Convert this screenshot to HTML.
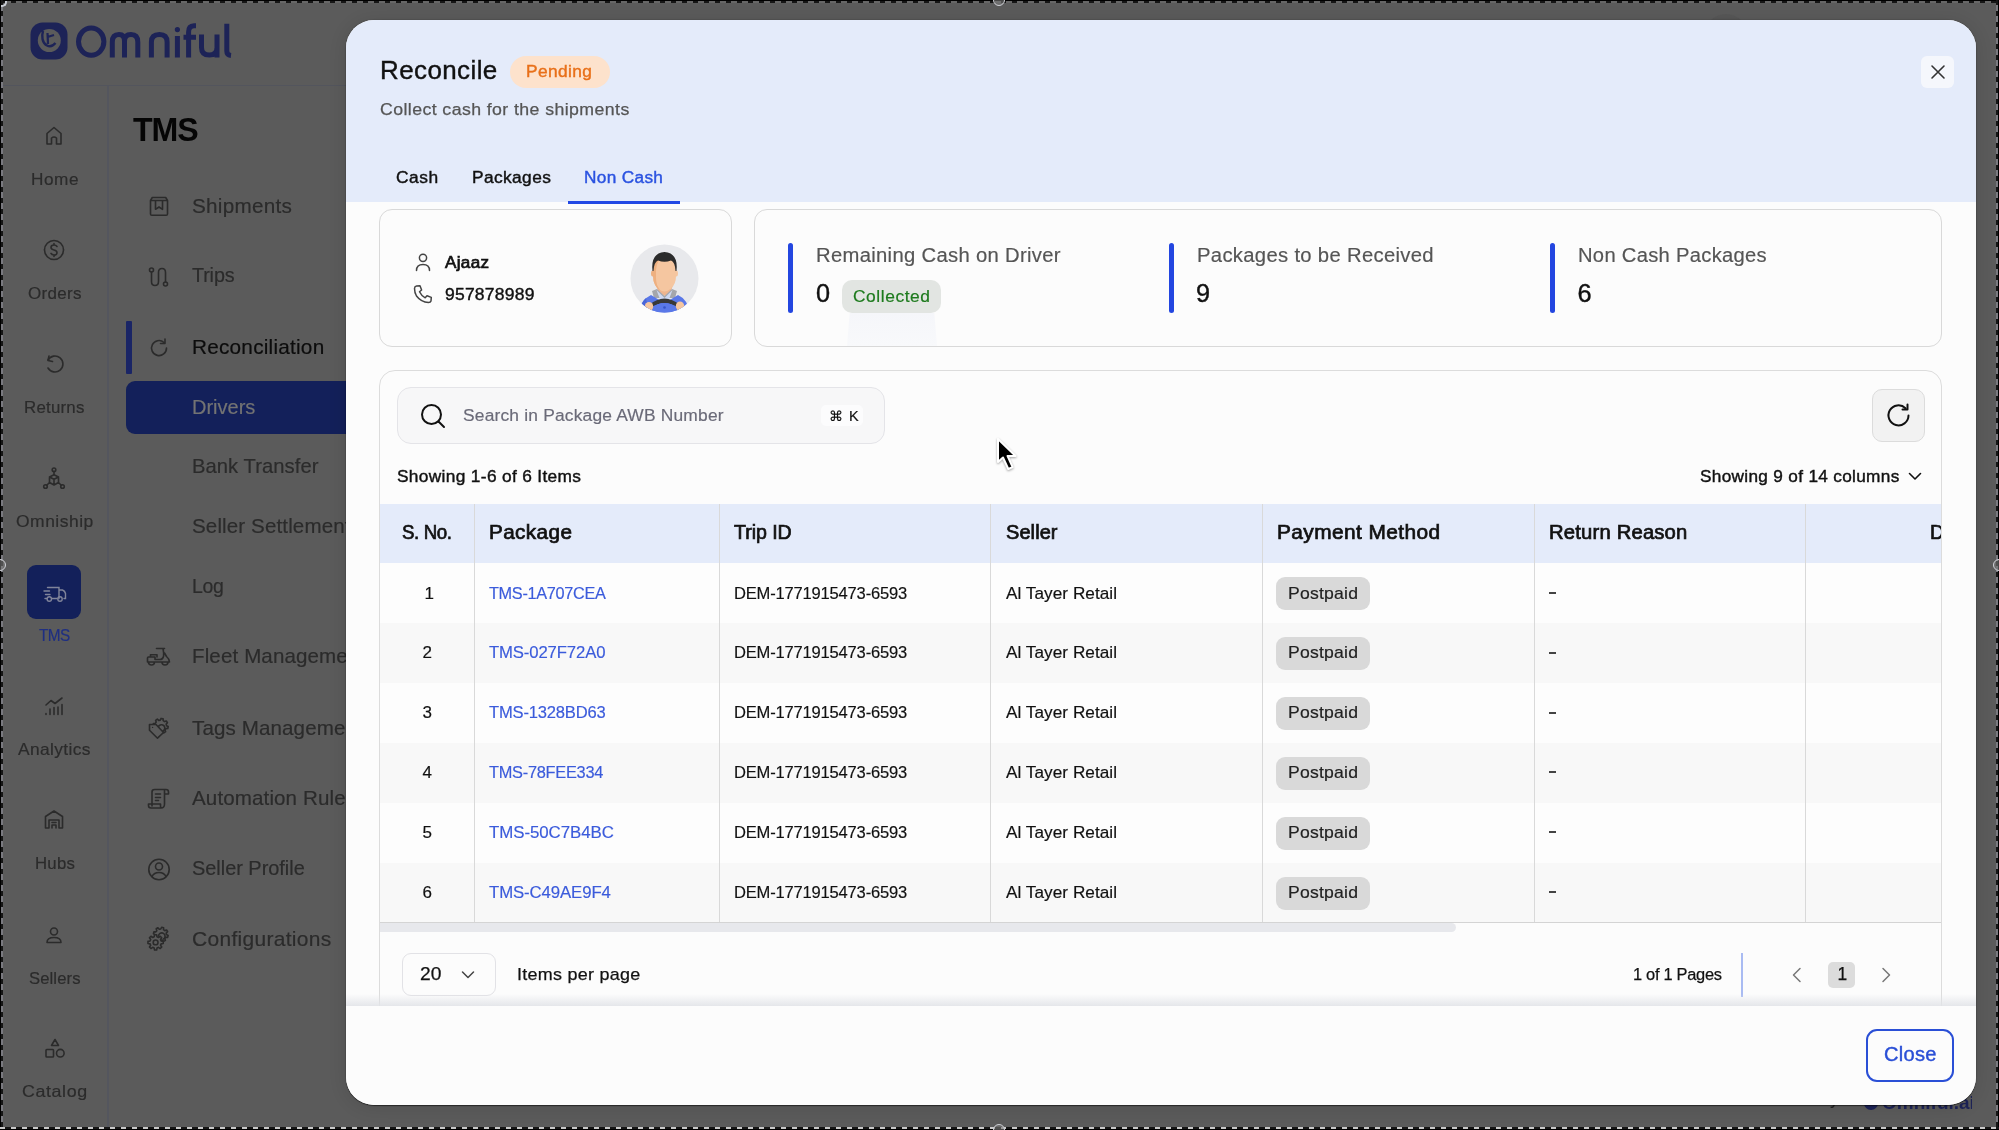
<!DOCTYPE html><html><head><meta charset="utf-8"><style>
html,body{margin:0;padding:0;}
body{width:1999px;height:1130px;position:relative;overflow:hidden;background:#5b5b5b;font-family:"Liberation Sans",sans-serif;}
.t{position:absolute;white-space:nowrap;}
.r{position:absolute;box-sizing:border-box;}
#wrap{position:absolute;left:0;top:0;width:1999px;height:1130px;will-change:transform;}
</style></head><body><div id="wrap">
<div class="r" style="left:0px;top:85px;width:346px;height:1px;background:#53555d"></div>
<div class="r" style="left:107px;top:86px;width:2px;height:1044px;background:#54565e"></div>
<svg class="r" style="left:28px;top:20px;" width="210" height="44" viewBox="0 0 210 44" fill="none">
<rect x="2.5" y="2.5" width="37" height="37" rx="12" fill="#1d2357"/>
<circle cx="21.3" cy="20.5" r="11.5" fill="#5b5b5b"/>
<path d="M15 11 C13.5 16 14 23 19 25.5 C22 27 25 26 27.5 23" stroke="#1d2357" stroke-width="2.4" fill="none"/>
<path d="M19.5 13 L20 24 M19.5 17 L26 15" stroke="#1d2357" stroke-width="2.2" fill="none"/>
<ellipse cx="63.2" cy="21.6" rx="12.7" ry="13.6" stroke="#1d2357" stroke-width="5"/>
<path d="M84.3 37.5 V22 Q84.3 14.5 91 14.5 Q96.5 14.5 96.5 21 V37.5 M96.5 21 Q96.5 14.5 103 14.5 Q109.8 14.5 109.8 22 V37.5" stroke="#1d2357" stroke-width="5"/>
<path d="M123.4 37.5 V22 Q123.4 14.5 131.5 14.5 Q139.1 14.5 139.1 22 V37.5" stroke="#1d2357" stroke-width="5"/>
<path d="M149.4 37.5 V16" stroke="#1d2357" stroke-width="5"/>
<circle cx="149.4" cy="9.6" r="2.6" fill="#1d2357"/>
<path d="M160.6 37.5 V12 Q160.6 6 166 5.8 H168 M155.5 17.2 H168" stroke="#1d2357" stroke-width="5"/>
<path d="M173.5 14.5 V27.5 Q173.5 35 181.3 35 Q189 35 189 27.5 V14.5 M189 25 V37.5" stroke="#1d2357" stroke-width="5"/>
<path d="M198.8 3.8 V31 Q198.8 35 203 35.5" stroke="#1d2357" stroke-width="5"/>
</svg>
<svg class="r" style="left:44px;top:125px;" width="20" height="21" viewBox="0 0 20 21" fill="none"><path d="M3 19 V8.5 L10 2.5 L17 8.5 V19 H12.5 V13 Q10 11 7.5 13 V19 Z" stroke="#2b2b2b" stroke-width="1.6" stroke-linecap="round" stroke-linejoin="round" fill="none"/></svg>
<svg class="r" style="left:42px;top:238px;" width="24" height="24" viewBox="0 0 24 24" fill="none"><circle cx="12" cy="12" r="9.5" stroke="#2b2b2b" stroke-width="1.6" stroke-linecap="round" stroke-linejoin="round" fill="none"/><path d="M15 8.5 Q14 7 12 7 Q9 7 9 9.4 Q9 11.3 12 12 Q15 12.7 15 14.7 Q15 17 12 17 Q9.8 17 9 15.4 M12 5.5 V7 M12 17 V18.5" stroke="#2b2b2b" stroke-width="1.6" stroke-linecap="round" stroke-linejoin="round" fill="none"/></svg>
<svg class="r" style="left:43px;top:352px;" width="22" height="24" viewBox="0 0 22 24" fill="none"><path d="M5 8 A8 8 0 1 1 5 16" stroke="#2b2b2b" stroke-width="1.6" stroke-linecap="round" stroke-linejoin="round" fill="none" transform="translate(0,0)"/><path d="M6 4 L5 8.5 L9.5 9.5" stroke="#2b2b2b" stroke-width="1.6" stroke-linecap="round" stroke-linejoin="round" fill="none"/></svg>
<svg class="r" style="left:42px;top:466px;" width="24" height="24" viewBox="0 0 24 24" fill="none"><circle cx="12" cy="3.8" r="1.8" stroke="#2b2b2b" stroke-width="1.6" stroke-linecap="round" stroke-linejoin="round" fill="none"/><path d="M12 5.6 V9 M7.5 11 L12 8.8 L16.5 11 V16.5 L12 19 L7.5 16.5 Z M7.5 11 L12 13.3 L16.5 11 M12 13.3 V19 M7.5 16.5 L4.5 19.5 M16.5 16.5 L19.5 19.5" stroke="#2b2b2b" stroke-width="1.6" stroke-linecap="round" stroke-linejoin="round" fill="none"/><circle cx="3.5" cy="20.5" r="1.8" stroke="#2b2b2b" stroke-width="1.6" stroke-linecap="round" stroke-linejoin="round" fill="none"/><circle cx="20.5" cy="20.5" r="1.8" stroke="#2b2b2b" stroke-width="1.6" stroke-linecap="round" stroke-linejoin="round" fill="none"/></svg>
<div class="r" style="left:27px;top:565px;width:54px;height:54px;background:#13205a;border-radius:9px"></div>
<svg class="r" style="left:41px;top:584px;" width="27" height="19" viewBox="0 0 27 19" fill="none"><path d="M6.5 3.5 H18 V14.5 M18 6 H21.5 Q24 7 24.5 9.5 V14.5 H23 M11 14.5 H16 M4 14.5 H5.5 M3 7 H8.5 M4.5 10.5 H9" stroke="#80849a" stroke-width="1.4" fill="none" stroke-linecap="round"/><circle cx="8.3" cy="15" r="2.2" stroke="#80849a" stroke-width="1.4"/><circle cx="19" cy="15" r="2.2" stroke="#80849a" stroke-width="1.4"/></svg>
<svg class="r" style="left:43px;top:696px;" width="22" height="21" viewBox="0 0 22 21" fill="none"><path d="M3 9 L8 4.5 L12 7.5 L19 2 M3 18.5 V17.5 M7 18.5 V13 M11 18.5 V11.5 M15 18.5 V11 M19 18.5 V8.5" stroke="#2b2b2b" stroke-width="1.6" stroke-linecap="round" stroke-linejoin="round" fill="none"/></svg>
<svg class="r" style="left:42px;top:808px;" width="24" height="23" viewBox="0 0 24 23" fill="none"><path d="M3.5 20 V8.5 L12 3 L20.5 8.5 V20 H17 V12 H7 V20 Z M10 20 V17 H14 V20 M10 14.5 H14" stroke="#2b2b2b" stroke-width="1.6" stroke-linecap="round" stroke-linejoin="round" fill="none"/></svg>
<svg class="r" style="left:44px;top:925px;" width="20" height="20" viewBox="0 0 20 20" fill="none"><circle cx="10" cy="6.5" r="3.5" stroke="#2b2b2b" stroke-width="1.6" stroke-linecap="round" stroke-linejoin="round" fill="none"/><path d="M3 17.5 Q3 12.5 10 12.5 Q17 12.5 17 17.5 Z" stroke="#2b2b2b" stroke-width="1.6" stroke-linecap="round" stroke-linejoin="round" fill="none"/></svg>
<svg class="r" style="left:43px;top:1037px;" width="24" height="24" viewBox="0 0 24 24" fill="none"><path d="M12 2.5 L15.5 8.5 H8.5 Z" stroke="#2b2b2b" stroke-width="1.6" stroke-linecap="round" stroke-linejoin="round" fill="none"/><rect x="3" y="12.5" width="7.5" height="7.5" rx="0.8" stroke="#2b2b2b" stroke-width="1.6" stroke-linecap="round" stroke-linejoin="round" fill="none"/><circle cx="17.3" cy="16.2" r="3.8" stroke="#2b2b2b" stroke-width="1.6" stroke-linecap="round" stroke-linejoin="round" fill="none"/></svg>
<div class="t" style="left:30.50px;top:170.91px;font-size:16.28px;line-height:16.28px;letter-spacing:0.515px;color:#2b2b2b;font-weight:normal;-webkit-text-stroke:0.18px #2b2b2b;transform:scaleX(1.0564);transform-origin:0.00px 0;">Home</div>
<div class="t" style="left:27.50px;top:285.01px;font-size:16.28px;line-height:16.28px;letter-spacing:0.287px;color:#2b2b2b;font-weight:normal;-webkit-text-stroke:0.18px #2b2b2b;transform:scaleX(1.0452);transform-origin:0.00px 0;">Orders</div>
<div class="t" style="left:24.20px;top:399.41px;font-size:16.28px;line-height:16.28px;letter-spacing:0.219px;color:#2b2b2b;font-weight:normal;-webkit-text-stroke:0.18px #2b2b2b;transform:scaleX(1.0359);transform-origin:0.00px 0;">Returns</div>
<div class="t" style="left:15.50px;top:513.21px;font-size:16.28px;line-height:16.28px;letter-spacing:0.455px;color:#2b2b2b;font-weight:normal;-webkit-text-stroke:0.18px #2b2b2b;transform:scaleX(1.0747);transform-origin:0.00px 0;">Omniship</div>
<div class="t" style="left:38.80px;top:627.01px;font-size:16.28px;line-height:16.28px;letter-spacing:-0.670px;color:#1f2f82;font-weight:normal;-webkit-text-stroke:0.18px #1f2f82;transform:scaleX(0.9447);transform-origin:0.00px 0;">TMS</div>
<div class="t" style="left:17.90px;top:741.21px;font-size:16.28px;line-height:16.28px;letter-spacing:0.349px;color:#2b2b2b;font-weight:normal;-webkit-text-stroke:0.18px #2b2b2b;transform:scaleX(1.0688);transform-origin:0.00px 0;">Analytics</div>
<div class="t" style="left:34.50px;top:855.11px;font-size:16.28px;line-height:16.28px;letter-spacing:0.247px;color:#2b2b2b;font-weight:normal;-webkit-text-stroke:0.18px #2b2b2b;transform:scaleX(1.0301);transform-origin:0.00px 0;">Hubs</div>
<div class="t" style="left:28.50px;top:969.71px;font-size:16.28px;line-height:16.28px;letter-spacing:0.114px;color:#2b2b2b;font-weight:normal;-webkit-text-stroke:0.18px #2b2b2b;transform:scaleX(1.0211);transform-origin:0.00px 0;">Sellers</div>
<div class="t" style="left:21.70px;top:1083.21px;font-size:16.28px;line-height:16.28px;letter-spacing:0.547px;color:#2b2b2b;font-weight:normal;-webkit-text-stroke:0.18px #2b2b2b;transform:scaleX(1.0963);transform-origin:0.00px 0;">Catalog</div>
<div class="t" style="left:132.70px;top:112.54px;font-size:33.72px;line-height:33.72px;letter-spacing:-1.172px;color:#050505;font-weight:bold;transform:scaleX(0.9529);transform-origin:0.00px 0;">TMS</div>
<div class="r" style="left:126px;top:321px;width:6px;height:53px;background:#1a2566;border-radius:1px"></div>
<div class="r" style="left:126px;top:381px;width:274px;height:53px;background:#13205a;border-radius:9px"></div>
<div class="t" style="left:192.20px;top:195.71px;font-size:20.06px;line-height:20.06px;letter-spacing:0.244px;color:#2b2b2b;font-weight:normal;-webkit-text-stroke:0.18px #2b2b2b;transform:scaleX(1.0319);transform-origin:0.00px 0;">Shipments</div>
<div class="t" style="left:192.20px;top:265.41px;font-size:20.06px;line-height:20.06px;letter-spacing:-0.127px;color:#2b2b2b;font-weight:normal;-webkit-text-stroke:0.18px #2b2b2b;transform:scaleX(0.9832);transform-origin:0.00px 0;">Trips</div>
<div class="t" style="left:192.20px;top:336.61px;font-size:20.06px;line-height:20.06px;letter-spacing:0.219px;color:#0c0c0c;font-weight:normal;-webkit-text-stroke:0.18px #0c0c0c;transform:scaleX(1.0354);transform-origin:0.00px 0;">Reconciliation</div>
<div class="t" style="left:192.20px;top:396.51px;font-size:20.06px;line-height:20.06px;letter-spacing:-0.007px;color:#737373;font-weight:normal;-webkit-text-stroke:0.18px #737373;transform:scaleX(0.9990);transform-origin:0.00px 0;">Drivers</div>
<div class="t" style="left:192.20px;top:456.41px;font-size:20.06px;line-height:20.06px;letter-spacing:0.055px;color:#2b2b2b;font-weight:normal;-webkit-text-stroke:0.18px #2b2b2b;transform:scaleX(1.0079);transform-origin:0.00px 0;">Bank Transfer</div>
<div class="t" style="left:192.20px;top:516.01px;font-size:20.06px;line-height:20.06px;letter-spacing:0.120px;color:#2b2b2b;font-weight:normal;-webkit-text-stroke:0.18px #2b2b2b;transform:scaleX(1.0250);transform-origin:0.00px 0;">Seller Settlement</div>
<div class="t" style="left:192.20px;top:575.61px;font-size:20.06px;line-height:20.06px;letter-spacing:-0.342px;color:#2b2b2b;font-weight:normal;-webkit-text-stroke:0.18px #2b2b2b;transform:scaleX(0.9703);transform-origin:0.00px 0;">Log</div>
<div class="t" style="left:192.20px;top:646.21px;font-size:20.06px;line-height:20.06px;letter-spacing:0.120px;color:#2b2b2b;font-weight:normal;-webkit-text-stroke:0.18px #2b2b2b;transform:scaleX(1.0250);transform-origin:0.00px 0;">Fleet Management</div>
<div class="t" style="left:192.20px;top:717.51px;font-size:20.06px;line-height:20.06px;letter-spacing:0.120px;color:#2b2b2b;font-weight:normal;-webkit-text-stroke:0.18px #2b2b2b;transform:scaleX(1.0250);transform-origin:0.00px 0;">Tags Management</div>
<div class="t" style="left:192.20px;top:788.21px;font-size:20.06px;line-height:20.06px;letter-spacing:0.120px;color:#2b2b2b;font-weight:normal;-webkit-text-stroke:0.18px #2b2b2b;transform:scaleX(1.0250);transform-origin:0.00px 0;">Automation Rules</div>
<div class="t" style="left:192.20px;top:858.41px;font-size:20.06px;line-height:20.06px;letter-spacing:-0.027px;color:#2b2b2b;font-weight:normal;-webkit-text-stroke:0.18px #2b2b2b;transform:scaleX(0.9953);transform-origin:0.00px 0;">Seller Profile</div>
<div class="t" style="left:192.20px;top:929.01px;font-size:20.06px;line-height:20.06px;letter-spacing:0.291px;color:#2b2b2b;font-weight:normal;-webkit-text-stroke:0.18px #2b2b2b;transform:scaleX(1.0459);transform-origin:0.00px 0;">Configurations</div>
<svg class="r" style="left:147px;top:195px;" width="23" height="23" viewBox="0 0 23 23" fill="none"><path d="M3.5 5.5 L5.3 2.5 H18.7 L20.5 5.5 V19 Q20.5 20.3 19.2 20.3 H4.8 Q3.5 20.3 3.5 19 Z M3.5 5.5 H20.5 M8.5 5.5 V14.3 L12 12 L15.5 14.3 V5.5" stroke="#2b2b2b" stroke-width="1.6" stroke-linecap="round" stroke-linejoin="round" fill="none"/></svg>
<svg class="r" style="left:147px;top:266px;" width="23" height="22" viewBox="0 0 23 22" fill="none"><circle cx="4.5" cy="4" r="2" stroke="#2b2b2b" stroke-width="1.6" stroke-linecap="round" stroke-linejoin="round" fill="none"/><circle cx="18.5" cy="18" r="2" stroke="#2b2b2b" stroke-width="1.6" stroke-linecap="round" stroke-linejoin="round" fill="none"/><path d="M4.5 6 V15.5 Q4.5 19.5 8 19.5 Q11.5 19.5 11.5 15.5 V6.5 Q11.5 2.5 15 2.5 Q18.5 2.5 18.5 6.5 V16" stroke="#2b2b2b" stroke-width="1.6" stroke-linecap="round" stroke-linejoin="round" fill="none"/></svg>
<svg class="r" style="left:148px;top:337px;" width="22" height="22" viewBox="0 0 22 22" fill="none"><path d="M18.5 11 A7.5 7.5 0 1 1 16 5.5" stroke="#2b2b2b" stroke-width="1.6" stroke-linecap="round" stroke-linejoin="round" fill="none"/><path d="M17 2 V6.5 H12.5" stroke="#2b2b2b" stroke-width="1.6" stroke-linecap="round" stroke-linejoin="round" fill="none"/></svg>
<svg class="r" style="left:145px;top:645px;" width="27" height="24" viewBox="0 0 27 24" fill="none"><path d="M11.5 3.5 H19.5 M18 3.5 Q19 8.5 18.6 11 Q18 14.5 14.5 14.5 H10 V12 H3.5 Q2.5 12 2.5 13 V17 H24.5 Q24.5 14 21.5 11.5 L19.5 8 M5.5 12 V9.8 H12 V12 M3.5 17 A3 3 0 0 0 9.5 17 M17 17 A3 3 0 0 0 23 17" stroke="#2b2b2b" stroke-width="1.6" stroke-linecap="round" stroke-linejoin="round" fill="none"/></svg>
<svg class="r" style="left:144px;top:712px;" width="32" height="32" viewBox="0 0 32 32" fill="none"><path d="M24.19 14.48 L23.77 16.52 L21.90 16.59 L21.00 17.94 L21.63 19.70 L19.89 20.85 L18.51 19.58 L16.93 19.89 L16.12 21.59 L14.08 21.17 L14.01 19.30 L12.66 18.40 L10.90 19.03 L9.75 17.29 L11.02 15.91 L10.71 14.33 L9.01 13.52 L9.43 11.48 L11.30 11.41 L12.20 10.06 L11.57 8.30 L13.31 7.15 L14.69 8.42 L16.27 8.11 L17.08 6.41 L19.12 6.83 L19.19 8.70 L20.54 9.60 L22.30 8.97 L23.45 10.71 L22.18 12.09 L22.49 13.67 Z" stroke="#2b2b2b" stroke-width="1.6" stroke-linecap="round" stroke-linejoin="round" fill="none"/><path d="M14.2 16 A3.3 3.3 0 1 1 19 19" stroke="#2b2b2b" stroke-width="1.6" stroke-linecap="round" stroke-linejoin="round" fill="none"/><path d="M5.5 12.5 H12 L19.5 20.5 L13.5 26.2 L5.5 18.2 Z" fill="#5b5b5b" stroke="#2b2b2b" stroke-width="1.6" stroke-linecap="round" stroke-linejoin="round" /><circle cx="8.6" cy="15.4" r="0.7" fill="#2b2b2b"/></svg>
<svg class="r" style="left:146px;top:787px;" width="26" height="24" viewBox="0 0 26 24" fill="none"><path d="M6 19 V5 Q6 2.5 8.5 2.5 H20 Q22.5 2.5 22.5 5 V7 H18.5 M18.5 3 V17 Q18.5 21 15 21 H5 Q2.5 21 2.5 18.5 V17 H14.5 V19 Q14.5 21 16 21 M9.5 7 H14.5 M9.5 10.5 H14.5 M9.5 13.5 H12.5" stroke="#2b2b2b" stroke-width="1.6" stroke-linecap="round" stroke-linejoin="round" fill="none"/></svg>
<svg class="r" style="left:146px;top:857px;" width="26" height="25" viewBox="0 0 26 25" fill="none"><circle cx="13" cy="12.5" r="10.2" stroke="#2b2b2b" stroke-width="1.6" stroke-linecap="round" stroke-linejoin="round" fill="none"/><circle cx="13" cy="9.5" r="3.5" stroke="#2b2b2b" stroke-width="1.6" stroke-linecap="round" stroke-linejoin="round" fill="none"/><path d="M6 19.5 Q8 15.5 13 15.5 Q18 15.5 20 19.5" stroke="#2b2b2b" stroke-width="1.6" stroke-linecap="round" stroke-linejoin="round" fill="none"/></svg>
<svg class="r" style="left:144px;top:924px;" width="32" height="32" viewBox="0 0 32 32" fill="none"><path d="M24.15 11.43 L23.65 13.40 L21.70 13.31 L20.78 14.54 L21.41 16.39 L19.67 17.42 L18.35 15.98 L16.83 16.20 L15.97 17.95 L14.00 17.45 L14.09 15.50 L12.86 14.58 L11.01 15.21 L9.98 13.47 L11.42 12.15 L11.20 10.63 L9.45 9.77 L9.95 7.80 L11.90 7.89 L12.82 6.66 L12.19 4.81 L13.93 3.78 L15.25 5.22 L16.77 5.00 L17.63 3.25 L19.60 3.75 L19.51 5.70 L20.74 6.62 L22.59 5.99 L23.62 7.73 L22.18 9.05 L22.40 10.57 Z" stroke="#2b2b2b" stroke-width="1.6" stroke-linecap="round" stroke-linejoin="round" fill="none"/><path d="M14.5 12 A3.3 3.3 0 1 1 19.5 15" stroke="#2b2b2b" stroke-width="1.6" stroke-linecap="round" stroke-linejoin="round" fill="none"/><path d="M19.23 17.35 L19.23 19.45 L17.12 19.84 L16.52 21.28 L17.74 23.05 L16.25 24.54 L14.48 23.32 L13.04 23.92 L12.65 26.03 L10.55 26.03 L10.16 23.92 L8.72 23.32 L6.95 24.54 L5.46 23.05 L6.68 21.28 L6.08 19.84 L3.97 19.45 L3.97 17.35 L6.08 16.96 L6.68 15.52 L5.46 13.75 L6.95 12.26 L8.72 13.48 L10.16 12.88 L10.55 10.77 L12.65 10.77 L13.04 12.88 L14.48 13.48 L16.25 12.26 L17.74 13.75 L16.52 15.52 L17.12 16.96 Z" fill="#5b5b5b" stroke="#2b2b2b" stroke-width="1.6" stroke-linecap="round" stroke-linejoin="round" /><circle cx="11.6" cy="18.4" r="2.4" stroke="#2b2b2b" stroke-width="1.6" stroke-linecap="round" stroke-linejoin="round" fill="none"/></svg>
<div class="r" style="left:1704px;top:14px;width:44px;height:44px;background:#575757;border-radius:50%"></div>
<div class="t" style="left:1758.00px;top:1091.96px;font-size:15.99px;line-height:15.99px;letter-spacing:-0.203px;color:#222;font-weight:normal;-webkit-text-stroke:0.18px #222;transform:scaleX(0.9686);transform-origin:0.00px 0;">Powered by</div>
<svg class="r" style="left:1862px;top:1091.5px;" width="110" height="22" viewBox="0 0 110 22" fill="none"><circle cx="9" cy="11" r="7" fill="#1d2357"/><text x="20" y="17" font-family="Liberation Sans" font-size="19" font-weight="bold" fill="#1d2357">Omniful.ai</text></svg>
<div class="r" style="left:346px;top:20px;width:1630px;height:1085px;border-radius:28px;background:#fcfcfc;overflow:hidden;box-shadow:0 1px 1px rgba(0,0,0,0.5),0 0 2px rgba(0,0,0,0.3),0 2px 18px rgba(0,0,0,0.12)">
<div class="r" style="left:0;top:0;width:1630px;height:182px;background:#e4ebfa"></div>
</div>
<div class="t" style="left:380.40px;top:58.85px;font-size:24.85px;line-height:24.85px;letter-spacing:0.392px;color:#111;font-weight:normal;-webkit-text-stroke:0.4px #111;transform:scaleX(1.0450);transform-origin:0.00px 0;">Reconcile</div>
<div class="r" style="left:510px;top:56px;width:100px;height:32px;background:#fde2cc;border-radius:16px"></div>
<div class="t" style="left:526.00px;top:63.09px;font-size:16.42px;line-height:16.42px;letter-spacing:0.362px;color:#e8701a;font-weight:normal;-webkit-text-stroke:0.4px #e8701a;transform:scaleX(1.0571);transform-origin:0.00px 0;">Pending</div>
<div class="t" style="left:379.50px;top:101.09px;font-size:16.42px;line-height:16.42px;letter-spacing:0.377px;color:#555;font-weight:normal;-webkit-text-stroke:0.25px #555;transform:scaleX(1.0805);transform-origin:0.00px 0;">Collect cash for the shipments</div>
<div class="r" style="left:1921px;top:56px;width:33px;height:32px;background:#f5f7fc;border-radius:6px"></div>
<svg class="r" style="left:1930px;top:64px;" width="16" height="16" viewBox="0 0 16 16" fill="none"><path d="M2 2 L14 14 M14 2 L2 14" stroke="#333" stroke-width="1.6" stroke-linecap="round"/></svg>
<div class="t" style="left:395.60px;top:169.09px;font-size:16.42px;line-height:16.42px;letter-spacing:0.474px;color:#111;font-weight:normal;-webkit-text-stroke:0.4px #111;transform:scaleX(1.0589);transform-origin:0.00px 0;">Cash</div>
<div class="t" style="left:471.50px;top:169.09px;font-size:16.42px;line-height:16.42px;letter-spacing:0.367px;color:#111;font-weight:normal;-webkit-text-stroke:0.4px #111;transform:scaleX(1.0564);transform-origin:0.00px 0;">Packages</div>
<div class="t" style="left:584.00px;top:169.09px;font-size:16.42px;line-height:16.42px;letter-spacing:0.326px;color:#2a52e0;font-weight:normal;-webkit-text-stroke:0.4px #2a52e0;transform:scaleX(1.0491);transform-origin:0.00px 0;">Non Cash</div>
<div class="r" style="left:568px;top:201px;width:112px;height:2.5999999999999943px;background:#2349e4"></div>
<div class="r" style="left:379px;top:209px;width:353px;height:138px;border:1px solid #d9d9d9;border-radius:13px;background:#fcfcfc"></div>
<svg class="r" style="left:413px;top:252px;" width="20" height="20" viewBox="0 0 20 20" fill="none"><circle cx="10" cy="5.8" r="3.6" stroke="#444" stroke-width="1.5" stroke-linecap="round" stroke-linejoin="round" fill="none"/><path d="M3.5 18.5 Q3.5 12.5 10 12.5 Q16.5 12.5 16.5 18.5" stroke="#444" stroke-width="1.5" stroke-linecap="round" stroke-linejoin="round" fill="none"/></svg>
<svg class="r" style="left:412px;top:283px;" width="22" height="22" viewBox="0 0 22 22" fill="none"><path d="M4.5 3 L8 2.8 L9.6 7 L7.5 8.8 Q9.5 13 13.2 14.8 L15 12.7 L19.3 14.4 L19 18 Q18.5 19.5 16.5 19.5 Q9 19 4.5 13 Q2.5 9.5 2.5 5.5 Q2.6 3.3 4.5 3 Z" stroke="#444" stroke-width="1.5" stroke-linecap="round" stroke-linejoin="round" fill="none"/></svg>
<div class="t" style="left:445.00px;top:253.51px;font-size:16.28px;line-height:16.28px;letter-spacing:0.313px;color:#111;font-weight:normal;-webkit-text-stroke:0.7px #111;transform:scaleX(1.0484);transform-origin:0.00px 0;">Ajaaz</div>
<div class="t" style="left:445.00px;top:285.50px;font-size:17.01px;line-height:17.01px;letter-spacing:0.209px;color:#111;font-weight:normal;-webkit-text-stroke:0.4px #111;transform:scaleX(1.0303);transform-origin:0.00px 0;">957878989</div>
<svg class="r" style="left:630px;top:244px;" width="69" height="69" viewBox="0 0 69 69" fill="none">
<defs><clipPath id="av"><circle cx="34.5" cy="34.5" r="34"/></clipPath></defs>
<circle cx="34.5" cy="34.5" r="34" fill="#e8e9ec"/>
<g clip-path="url(#av)">
<path d="M26 41 L28 47 L34.5 52 L41 47 L43 41 Z" fill="#eeb58e"/>
<path d="M22 47 L27 45 L34.5 52 L42 45 L47 47 L45 54 H24 Z" fill="#a4a6ac"/>
<path d="M26.5 46 L34.5 54 L31 58 Z M42.5 46 L34.5 54 L38 58 Z" fill="#cdd8f2"/>
<path d="M9 72 Q10 56 21 51 L31 57 L34.5 60 L38 57 L48 51 Q59 56 60 72 Z" fill="#5a78e8"/>
<path d="M9 72 Q10 58 16 54 L19 72 Z" fill="#4a66d8"/>
<path d="M23 24 Q23 11.5 34.5 11.5 Q46 11.5 46 24 V32 Q46 40 41 44.5 Q37.5 47.5 34.5 47.5 Q31.5 47.5 28 44.5 Q23 40 23 32 Z" fill="#f5c6a0"/>
<path d="M23 24 Q23 12 33 11.6 Q27 16 26 26 V34 Q26 41 30 46 Q27 45 25 41 Q23 37 23 32 Z" fill="#eeb080"/>
<ellipse cx="22.6" cy="29.5" rx="1.6" ry="3" fill="#eeb080"/><ellipse cx="46.4" cy="29.5" rx="1.6" ry="3" fill="#f5c6a0"/>
<path d="M22.5 27 Q20.5 9 34.5 8 Q48.5 9 46.5 27 L45.5 27 Q45 18 41 16.5 Q34.5 19 28 16.5 Q24 18 23.5 27 Z" fill="#2b2b2b"/>
<path d="M19 61 Q34.5 48 50 61 L48 64 Q34.5 54 21 64 Z" fill="#383838"/>
<path d="M21 64 Q34.5 54 48 64 L51 72 H18 Z" fill="#5a78e8"/>
<path d="M17 62 L21 64 L25 72 H19 Z M52 62 L48 64 L44 72 H50 Z" fill="#a9abb0"/>
<path d="M28 72 Q34.5 66 41 72 Z" fill="#d9dadd"/>
<circle cx="34.5" cy="63.5" r="1.3" fill="#3554c8"/>
<ellipse cx="19" cy="62.5" rx="4.2" ry="4.6" fill="#f5c6a0"/><ellipse cx="50" cy="62" rx="4.2" ry="4.6" fill="#f5c6a0"/>
</g></svg>
<div class="r" style="left:754px;top:209px;width:1188px;height:138px;border:1px solid #d9d9d9;border-radius:13px;background:#fcfcfc"></div>
<div class="r" style="left:847px;top:313px;width:90px;height:33px;background:linear-gradient(#f5f6fa,#f8f9fb);clip-path:polygon(3% 0,97% 0,100% 100%,0 100%)"></div>
<div class="r" style="left:788px;top:243px;width:5px;height:70px;background:#2346e0;border-radius:3px"></div>
<div class="t" style="left:816.00px;top:246.13px;font-size:19.33px;line-height:19.33px;letter-spacing:0.296px;color:#555;font-weight:normal;-webkit-text-stroke:0.18px #555;transform:scaleX(1.0472);transform-origin:0.00px 0;">Remaining Cash on Driver</div>
<div class="r" style="left:1169px;top:243px;width:5px;height:70px;background:#2346e0;border-radius:3px"></div>
<div class="t" style="left:1197.00px;top:246.13px;font-size:19.33px;line-height:19.33px;letter-spacing:0.302px;color:#555;font-weight:normal;-webkit-text-stroke:0.18px #555;transform:scaleX(1.0476);transform-origin:0.00px 0;">Packages to be Received</div>
<div class="r" style="left:1550px;top:243px;width:5px;height:70px;background:#2346e0;border-radius:3px"></div>
<div class="t" style="left:1578.00px;top:246.13px;font-size:19.33px;line-height:19.33px;letter-spacing:0.300px;color:#555;font-weight:normal;-webkit-text-stroke:0.18px #555;transform:scaleX(1.0425);transform-origin:0.00px 0;">Non Cash Packages</div>
<div class="t" style="left:815.90px;top:281.08px;font-size:25.29px;line-height:25.29px;letter-spacing:0.000px;color:#111;font-weight:normal;-webkit-text-stroke:0.4px #111;">0</div>
<div class="r" style="left:842px;top:280px;width:99px;height:33px;background:#e2e5e2;border-radius:10px"></div>
<div class="t" style="left:852.50px;top:288.58px;font-size:15.84px;line-height:15.84px;letter-spacing:0.499px;color:#1d7a1d;font-weight:normal;-webkit-text-stroke:0.18px #1d7a1d;transform:scaleX(1.0996);transform-origin:0.00px 0;">Collected</div>
<div class="t" style="left:1196.00px;top:281.08px;font-size:25.29px;line-height:25.29px;letter-spacing:0.000px;color:#111;font-weight:normal;-webkit-text-stroke:0.4px #111;">9</div>
<div class="t" style="left:1577.50px;top:281.08px;font-size:25.29px;line-height:25.29px;letter-spacing:0.000px;color:#111;font-weight:normal;-webkit-text-stroke:0.4px #111;">6</div>
<div class="r" style="left:379px;top:370px;width:1563px;height:700px;border:1px solid #dcdcdc;border-radius:16px;background:#fcfcfc"></div>
<div class="r" style="left:397px;top:387px;width:488px;height:57px;border:1px solid #e4e4e8;border-radius:14px;background:#f7f7f8"></div>
<svg class="r" style="left:419px;top:402px;" width="28" height="28" viewBox="0 0 28 28" fill="none"><circle cx="12.5" cy="12.5" r="9.5" stroke="#111" stroke-width="2"/><path d="M19.5 19.5 L25 25" stroke="#111" stroke-width="2" stroke-linecap="round"/></svg>
<div class="t" style="left:463.30px;top:407.52px;font-size:16.86px;line-height:16.86px;letter-spacing:0.185px;color:#6a6a78;font-weight:normal;-webkit-text-stroke:0.18px #6a6a78;transform:scaleX(1.0310);transform-origin:0.00px 0;">Search in Package AWB Number</div>
<div class="r" style="left:821px;top:405px;width:42px;height:21px;background:#fcfcfd;border-radius:5px"></div>
<div class="t" style="left:828.50px;top:410.37px;font-size:13.50px;line-height:13.50px;letter-spacing:0.000px;color:#111;font-weight:normal;-webkit-text-stroke:0.18px #111;">&#8984;</div>
<div class="t" style="left:849.00px;top:408.69px;font-size:14.53px;line-height:14.53px;letter-spacing:0.000px;color:#111;font-weight:normal;-webkit-text-stroke:0.18px #111;">K</div>
<div class="r" style="left:1872px;top:389px;width:53px;height:53px;border:1px solid #dcdcdc;border-radius:10px;background:#f2f2f2"></div>
<svg class="r" style="left:1885.2px;top:401.3px;" width="29" height="29" viewBox="0 0 29 29" fill="none"><path d="M23.5 14.5 A10 10 0 1 1 20.5 7.2" stroke="#111" stroke-width="2" stroke-linecap="round"/><path d="M22.5 3.5 V8.5 H17.5" stroke="#111" stroke-width="2" stroke-linecap="round" stroke-linejoin="round"/></svg>
<div class="t" style="left:397.30px;top:468.01px;font-size:16.28px;line-height:16.28px;letter-spacing:0.315px;color:#111;font-weight:normal;-webkit-text-stroke:0.4px #111;transform:scaleX(1.0635);transform-origin:0.00px 0;">Showing 1-6 of 6 Items</div>
<div class="t" style="left:1699.60px;top:468.01px;font-size:16.28px;line-height:16.28px;letter-spacing:0.301px;color:#111;font-weight:normal;-webkit-text-stroke:0.4px #111;transform:scaleX(1.0578);transform-origin:0.00px 0;">Showing 9 of 14 columns</div>
<svg class="r" style="left:1906px;top:469px;" width="18" height="14" viewBox="0 0 18 14" fill="none"><path d="M3.5 4.5 L9 10 L14.5 4.5" stroke="#111" stroke-width="1.6" stroke-linecap="round" stroke-linejoin="round"/></svg>
<div class="r" style="left:0;top:0;width:1941px;height:1130px;overflow:hidden">
<div class="r" style="left:380px;top:504px;width:1562px;height:59px;background:#e4ebfa"></div>
<div class="r" style="left:380px;top:563px;width:1562px;height:60px;background:#fdfdfd"></div>
<div class="r" style="left:380px;top:623px;width:1562px;height:60px;background:#f8f8f8"></div>
<div class="r" style="left:380px;top:683px;width:1562px;height:60px;background:#fdfdfd"></div>
<div class="r" style="left:380px;top:743px;width:1562px;height:60px;background:#f8f8f8"></div>
<div class="r" style="left:380px;top:803px;width:1562px;height:60px;background:#fdfdfd"></div>
<div class="r" style="left:380px;top:863px;width:1562px;height:59px;background:#f8f8f8"></div>
<div class="r" style="left:474px;top:504px;width:1px;height:418px;background:#d9d9d9"></div>
<div class="r" style="left:719px;top:504px;width:1px;height:418px;background:#d9d9d9"></div>
<div class="r" style="left:990px;top:504px;width:1px;height:418px;background:#d9d9d9"></div>
<div class="r" style="left:1262px;top:504px;width:1px;height:418px;background:#d9d9d9"></div>
<div class="r" style="left:1534px;top:504px;width:1px;height:418px;background:#d9d9d9"></div>
<div class="r" style="left:1805px;top:504px;width:1px;height:418px;background:#d9d9d9"></div>
<div class="r" style="left:380px;top:922px;width:1562px;height:1px;background:#d4d4d4"></div>
<div class="r" style="left:380px;top:923px;width:1076px;height:9px;background:#e7e8ec;border-radius:0 5px 5px 0"></div>
<div class="t" style="left:402.00px;top:523.06px;font-size:19.77px;line-height:19.77px;letter-spacing:-0.417px;color:#111;font-weight:normal;-webkit-text-stroke:0.7px #111;transform:scaleX(0.9461);transform-origin:0.00px 0;">S. No.</div>
<div class="t" style="left:489.00px;top:523.06px;font-size:19.77px;line-height:19.77px;letter-spacing:0.381px;color:#111;font-weight:normal;-webkit-text-stroke:0.7px #111;transform:scaleX(1.0467);transform-origin:0.00px 0;">Package</div>
<div class="t" style="left:733.80px;top:523.06px;font-size:19.77px;line-height:19.77px;letter-spacing:-0.059px;color:#111;font-weight:normal;-webkit-text-stroke:0.7px #111;transform:scaleX(0.9911);transform-origin:0.00px 0;">Trip ID</div>
<div class="t" style="left:1005.50px;top:523.06px;font-size:19.77px;line-height:19.77px;letter-spacing:0.077px;color:#111;font-weight:normal;-webkit-text-stroke:0.7px #111;transform:scaleX(1.0116);transform-origin:0.00px 0;">Seller</div>
<div class="t" style="left:1276.60px;top:523.06px;font-size:19.77px;line-height:19.77px;letter-spacing:0.402px;color:#111;font-weight:normal;-webkit-text-stroke:0.7px #111;transform:scaleX(1.0553);transform-origin:0.00px 0;">Payment Method</div>
<div class="t" style="left:1548.60px;top:523.06px;font-size:19.77px;line-height:19.77px;letter-spacing:0.175px;color:#111;font-weight:normal;-webkit-text-stroke:0.7px #111;transform:scaleX(1.0242);transform-origin:0.00px 0;">Return Reason</div>
<div class="t" style="left:1930.00px;top:523.06px;font-size:19.77px;line-height:19.77px;letter-spacing:0.000px;color:#111;font-weight:normal;-webkit-text-stroke:0.7px #111;">D</div>
<div class="t" style="left:424.50px;top:584.52px;font-size:17.01px;line-height:17.01px;letter-spacing:0.000px;color:#111;font-weight:normal;-webkit-text-stroke:0.18px #111;">1</div>
<div class="t" style="left:489.20px;top:584.52px;font-size:17.01px;line-height:17.01px;letter-spacing:-0.338px;color:#3b5bdb;font-weight:normal;-webkit-text-stroke:0.18px #3b5bdb;transform:scaleX(0.9576);transform-origin:0.00px 0;">TMS-1A707CEA</div>
<div class="t" style="left:734.00px;top:584.52px;font-size:17.01px;line-height:17.01px;letter-spacing:-0.189px;color:#111;font-weight:normal;-webkit-text-stroke:0.18px #111;transform:scaleX(0.9726);transform-origin:0.00px 0;">DEM-1771915473-6593</div>
<div class="t" style="left:1005.50px;top:584.52px;font-size:17.01px;line-height:17.01px;letter-spacing:0.049px;color:#111;font-weight:normal;-webkit-text-stroke:0.18px #111;transform:scaleX(1.0093);transform-origin:0.00px 0;">Al Tayer Retail</div>
<div class="r" style="left:1276px;top:577px;width:94px;height:33px;background:#d9d9d9;border-radius:9px"></div>
<div class="t" style="left:1288.00px;top:584.52px;font-size:17.01px;line-height:17.01px;letter-spacing:0.212px;color:#222;font-weight:normal;-webkit-text-stroke:0.18px #222;transform:scaleX(1.0347);transform-origin:0.00px 0;">Postpaid</div>
<div class="r" style="left:1549px;top:592px;width:7px;height:1.5px;background:#444"></div>
<div class="t" style="left:422.50px;top:644.37px;font-size:17.01px;line-height:17.01px;letter-spacing:0.000px;color:#111;font-weight:normal;-webkit-text-stroke:0.18px #111;">2</div>
<div class="t" style="left:489.20px;top:644.37px;font-size:17.01px;line-height:17.01px;letter-spacing:-0.131px;color:#3b5bdb;font-weight:normal;-webkit-text-stroke:0.18px #3b5bdb;transform:scaleX(0.9824);transform-origin:0.00px 0;">TMS-027F72A0</div>
<div class="t" style="left:734.00px;top:644.37px;font-size:17.01px;line-height:17.01px;letter-spacing:-0.189px;color:#111;font-weight:normal;-webkit-text-stroke:0.18px #111;transform:scaleX(0.9726);transform-origin:0.00px 0;">DEM-1771915473-6593</div>
<div class="t" style="left:1005.50px;top:644.37px;font-size:17.01px;line-height:17.01px;letter-spacing:0.049px;color:#111;font-weight:normal;-webkit-text-stroke:0.18px #111;transform:scaleX(1.0093);transform-origin:0.00px 0;">Al Tayer Retail</div>
<div class="r" style="left:1276px;top:637px;width:94px;height:33px;background:#d9d9d9;border-radius:9px"></div>
<div class="t" style="left:1288.00px;top:644.37px;font-size:17.01px;line-height:17.01px;letter-spacing:0.212px;color:#222;font-weight:normal;-webkit-text-stroke:0.18px #222;transform:scaleX(1.0347);transform-origin:0.00px 0;">Postpaid</div>
<div class="r" style="left:1549px;top:652px;width:7px;height:1.5px;background:#444"></div>
<div class="t" style="left:422.50px;top:704.22px;font-size:17.01px;line-height:17.01px;letter-spacing:0.000px;color:#111;font-weight:normal;-webkit-text-stroke:0.18px #111;">3</div>
<div class="t" style="left:489.20px;top:704.22px;font-size:17.01px;line-height:17.01px;letter-spacing:-0.191px;color:#3b5bdb;font-weight:normal;-webkit-text-stroke:0.18px #3b5bdb;transform:scaleX(0.9748);transform-origin:0.00px 0;">TMS-1328BD63</div>
<div class="t" style="left:734.00px;top:704.22px;font-size:17.01px;line-height:17.01px;letter-spacing:-0.189px;color:#111;font-weight:normal;-webkit-text-stroke:0.18px #111;transform:scaleX(0.9726);transform-origin:0.00px 0;">DEM-1771915473-6593</div>
<div class="t" style="left:1005.50px;top:704.22px;font-size:17.01px;line-height:17.01px;letter-spacing:0.049px;color:#111;font-weight:normal;-webkit-text-stroke:0.18px #111;transform:scaleX(1.0093);transform-origin:0.00px 0;">Al Tayer Retail</div>
<div class="r" style="left:1276px;top:697px;width:94px;height:33px;background:#d9d9d9;border-radius:9px"></div>
<div class="t" style="left:1288.00px;top:704.22px;font-size:17.01px;line-height:17.01px;letter-spacing:0.212px;color:#222;font-weight:normal;-webkit-text-stroke:0.18px #222;transform:scaleX(1.0347);transform-origin:0.00px 0;">Postpaid</div>
<div class="r" style="left:1549px;top:712px;width:7px;height:1.5px;background:#444"></div>
<div class="t" style="left:422.50px;top:764.07px;font-size:17.01px;line-height:17.01px;letter-spacing:0.000px;color:#111;font-weight:normal;-webkit-text-stroke:0.18px #111;">4</div>
<div class="t" style="left:489.20px;top:764.07px;font-size:17.01px;line-height:17.01px;letter-spacing:-0.284px;color:#3b5bdb;font-weight:normal;-webkit-text-stroke:0.18px #3b5bdb;transform:scaleX(0.9630);transform-origin:0.00px 0;">TMS-78FEE334</div>
<div class="t" style="left:734.00px;top:764.07px;font-size:17.01px;line-height:17.01px;letter-spacing:-0.189px;color:#111;font-weight:normal;-webkit-text-stroke:0.18px #111;transform:scaleX(0.9726);transform-origin:0.00px 0;">DEM-1771915473-6593</div>
<div class="t" style="left:1005.50px;top:764.07px;font-size:17.01px;line-height:17.01px;letter-spacing:0.049px;color:#111;font-weight:normal;-webkit-text-stroke:0.18px #111;transform:scaleX(1.0093);transform-origin:0.00px 0;">Al Tayer Retail</div>
<div class="r" style="left:1276px;top:757px;width:94px;height:33px;background:#d9d9d9;border-radius:9px"></div>
<div class="t" style="left:1288.00px;top:764.07px;font-size:17.01px;line-height:17.01px;letter-spacing:0.212px;color:#222;font-weight:normal;-webkit-text-stroke:0.18px #222;transform:scaleX(1.0347);transform-origin:0.00px 0;">Postpaid</div>
<div class="r" style="left:1549px;top:771px;width:7px;height:1.5px;background:#444"></div>
<div class="t" style="left:422.50px;top:823.92px;font-size:17.01px;line-height:17.01px;letter-spacing:0.000px;color:#111;font-weight:normal;-webkit-text-stroke:0.18px #111;">5</div>
<div class="t" style="left:489.20px;top:823.92px;font-size:17.01px;line-height:17.01px;letter-spacing:-0.063px;color:#3b5bdb;font-weight:normal;-webkit-text-stroke:0.18px #3b5bdb;transform:scaleX(0.9918);transform-origin:0.00px 0;">TMS-50C7B4BC</div>
<div class="t" style="left:734.00px;top:823.92px;font-size:17.01px;line-height:17.01px;letter-spacing:-0.189px;color:#111;font-weight:normal;-webkit-text-stroke:0.18px #111;transform:scaleX(0.9726);transform-origin:0.00px 0;">DEM-1771915473-6593</div>
<div class="t" style="left:1005.50px;top:823.92px;font-size:17.01px;line-height:17.01px;letter-spacing:0.049px;color:#111;font-weight:normal;-webkit-text-stroke:0.18px #111;transform:scaleX(1.0093);transform-origin:0.00px 0;">Al Tayer Retail</div>
<div class="r" style="left:1276px;top:817px;width:94px;height:33px;background:#d9d9d9;border-radius:9px"></div>
<div class="t" style="left:1288.00px;top:823.92px;font-size:17.01px;line-height:17.01px;letter-spacing:0.212px;color:#222;font-weight:normal;-webkit-text-stroke:0.18px #222;transform:scaleX(1.0347);transform-origin:0.00px 0;">Postpaid</div>
<div class="r" style="left:1549px;top:831px;width:7px;height:1.5px;background:#444"></div>
<div class="t" style="left:422.50px;top:883.77px;font-size:17.01px;line-height:17.01px;letter-spacing:0.000px;color:#111;font-weight:normal;-webkit-text-stroke:0.18px #111;">6</div>
<div class="t" style="left:489.20px;top:883.77px;font-size:17.01px;line-height:17.01px;letter-spacing:-0.105px;color:#3b5bdb;font-weight:normal;-webkit-text-stroke:0.18px #3b5bdb;transform:scaleX(0.9864);transform-origin:0.00px 0;">TMS-C49AE9F4</div>
<div class="t" style="left:734.00px;top:883.77px;font-size:17.01px;line-height:17.01px;letter-spacing:-0.189px;color:#111;font-weight:normal;-webkit-text-stroke:0.18px #111;transform:scaleX(0.9726);transform-origin:0.00px 0;">DEM-1771915473-6593</div>
<div class="t" style="left:1005.50px;top:883.77px;font-size:17.01px;line-height:17.01px;letter-spacing:0.049px;color:#111;font-weight:normal;-webkit-text-stroke:0.18px #111;transform:scaleX(1.0093);transform-origin:0.00px 0;">Al Tayer Retail</div>
<div class="r" style="left:1276px;top:877px;width:94px;height:33px;background:#d9d9d9;border-radius:9px"></div>
<div class="t" style="left:1288.00px;top:883.77px;font-size:17.01px;line-height:17.01px;letter-spacing:0.212px;color:#222;font-weight:normal;-webkit-text-stroke:0.18px #222;transform:scaleX(1.0347);transform-origin:0.00px 0;">Postpaid</div>
<div class="r" style="left:1549px;top:891px;width:7px;height:1.5px;background:#444"></div>
</div>
<div class="r" style="left:402px;top:953px;width:94px;height:43px;border:1px solid #e2e2e6;border-radius:9px;background:#fcfcfc"></div>
<div class="t" style="left:420.00px;top:964.25px;font-size:19.19px;line-height:19.19px;letter-spacing:0.026px;color:#111;font-weight:normal;-webkit-text-stroke:0.25px #111;transform:scaleX(1.0018);transform-origin:0.00px 0;">20</div>
<svg class="r" style="left:459px;top:968px;" width="18" height="14" viewBox="0 0 18 14" fill="none"><path d="M3.5 4 L9 9.5 L14.5 4" stroke="#444" stroke-width="1.5" stroke-linecap="round" stroke-linejoin="round"/></svg>
<div class="t" style="left:516.50px;top:965.97px;font-size:17.15px;line-height:17.15px;letter-spacing:0.262px;color:#111;font-weight:normal;-webkit-text-stroke:0.25px #111;transform:scaleX(1.0467);transform-origin:0.00px 0;">Items per page</div>
<div class="t" style="left:1632.70px;top:965.65px;font-size:17.30px;line-height:17.30px;letter-spacing:-0.311px;color:#111;font-weight:normal;-webkit-text-stroke:0.25px #111;transform:scaleX(0.9498);transform-origin:0.00px 0;">1 of 1 Pages</div>
<div class="r" style="left:1741px;top:953px;width:2px;height:44px;background:#a9bbf2"></div>
<svg class="r" style="left:1789px;top:966px;" width="16" height="18" viewBox="0 0 16 18" fill="none"><path d="M11 2.5 L4.5 9 L11 15.5" stroke="#777" stroke-width="1.5" stroke-linecap="round" stroke-linejoin="round"/></svg>
<div class="r" style="left:1828px;top:962px;width:27px;height:26px;background:#dcdcdc;border-radius:5px"></div>
<div class="t" style="left:1837.50px;top:966.23px;font-size:17.44px;line-height:17.44px;letter-spacing:0.000px;color:#111;font-weight:normal;-webkit-text-stroke:0.25px #111;">1</div>
<svg class="r" style="left:1878px;top:966px;" width="16" height="18" viewBox="0 0 16 18" fill="none"><path d="M5 2.5 L11.5 9 L5 15.5" stroke="#777" stroke-width="1.5" stroke-linecap="round" stroke-linejoin="round"/></svg>
<div class="r" style="left:346px;top:1006px;width:1630px;height:99px;background:#fcfcfc;border-radius:0 0 28px 28px"></div>
<div class="r" style="left:346px;top:994px;width:1630px;height:12px;background:linear-gradient(rgba(230,232,236,0),rgba(226,228,232,0.9))"></div>
<div class="r" style="left:1866px;top:1029px;width:88px;height:53px;border:2px solid #2a4fd6;border-radius:11px;background:#fcfcfc"></div>
<div class="t" style="left:1883.80px;top:1045.30px;font-size:19.48px;line-height:19.48px;letter-spacing:0.254px;color:#2a4fd6;font-weight:normal;-webkit-text-stroke:0.4px #2a4fd6;transform:scaleX(1.0315);transform-origin:0.00px 0;">Close</div>
<svg class="r" style="left:994.3px;top:435px;" width="28" height="42" viewBox="0 0 28 42" fill="none"><path d="M4 4 V27 L9 22.5 L14.3 34 L18.6 32.2 L13.6 21 H21.6 Z" fill="#000" stroke="#fff" stroke-width="2" stroke-linejoin="round" style="filter:drop-shadow(0 1px 1.2px rgba(0,0,0,0.35))"/></svg>
<div class="r" style="left:0px;top:0px;width:1999px;height:1px;background:#000"></div>
<div class="r" style="left:0px;top:1px;width:1999px;height:2px;background:repeating-linear-gradient(90deg,#161616 0 5px,#676767 5px 11px)"></div>
<div class="r" style="left:0px;top:0px;width:1px;height:1130px;background:#000"></div>
<div class="r" style="left:1px;top:0px;width:2px;height:1130px;background:repeating-linear-gradient(180deg,#161616 0 5px,#7a7a80 5px 11px)"></div>
<div class="r" style="left:1998px;top:0px;width:1px;height:1130px;background:#000"></div>
<div class="r" style="left:1996px;top:0px;width:2px;height:1130px;background:repeating-linear-gradient(180deg,#161616 0 5px,#7a7a80 5px 11px)"></div>
<div class="r" style="left:0px;top:1129px;width:1999px;height:1px;background:#000"></div>
<div class="r" style="left:0px;top:1127px;width:1999px;height:2px;background:repeating-linear-gradient(90deg,#c8c8c8 0 5px,#161616 5px 11px)"></div>
<div class="r" style="left:993px;top:-6px;width:12px;height:12px;border:1.5px solid #d0d2d8;border-radius:50%;background:rgba(120,120,120,0.6)"></div>
<div class="r" style="left:993px;top:1124px;width:12px;height:12px;border:1.5px solid #d0d2d8;border-radius:50%;background:rgba(120,120,120,0.6)"></div>
<div class="r" style="left:-6px;top:559px;width:12px;height:12px;border:1.5px solid #d0d2d8;border-radius:50%;background:rgba(120,120,120,0.6)"></div>
<div class="r" style="left:1993px;top:559px;width:12px;height:12px;border:1.5px solid #d0d2d8;border-radius:50%;background:rgba(120,120,120,0.6)"></div>
<div class="r" style="left:1px;top:1px;width:6px;height:6px;border-left:0;border-top:0;border-right:2px solid #c8ccd4;border-bottom:2px solid #c8ccd4;border-radius:0 0 5px 0"></div>
</div></body></html>
